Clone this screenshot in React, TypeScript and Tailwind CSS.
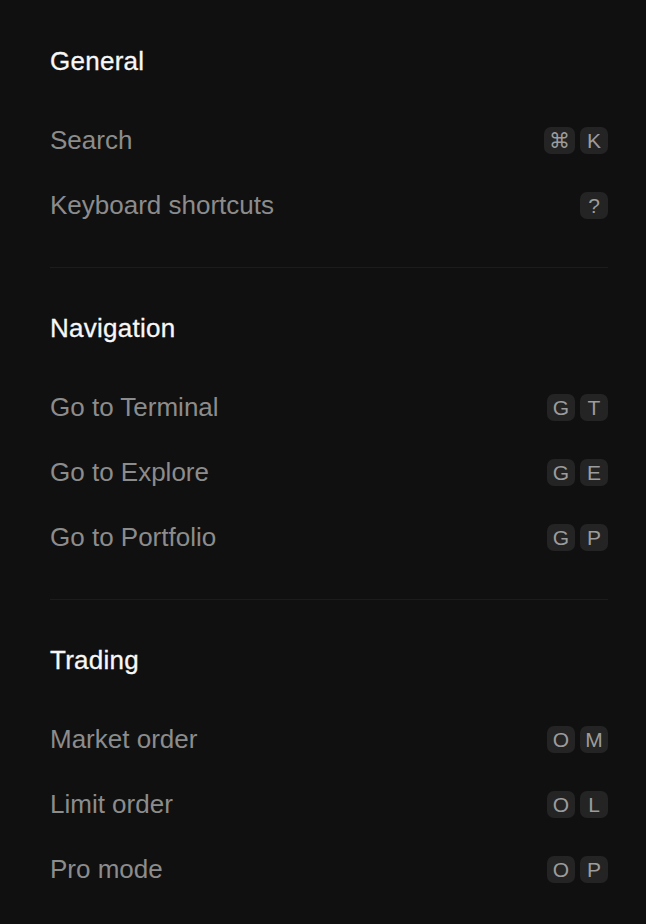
const sections = [
  {
    title: "General",
    items: [
      { label: "Search", keys: ["⌘", "K"] },
      { label: "Keyboard shortcuts", keys: ["?"] },
    ],
  },
  {
    title: "Navigation",
    items: [
      { label: "Go to Terminal", keys: ["G", "T"] },
      { label: "Go to Explore", keys: ["G", "E"] },
      { label: "Go to Portfolio", keys: ["G", "P"] },
    ],
  },
  {
    title: "Trading",
    items: [
      { label: "Market order", keys: ["O", "M"] },
      { label: "Limit order", keys: ["O", "L"] },
      { label: "Pro mode", keys: ["O", "P"] },
    ],
  },
];

function Kbd({ k }: { k: string }) {
  return (
    <kbd className="flex h-[27px] min-w-[28px] items-center justify-center rounded-[7px] bg-[#242424] px-[5px] font-[inherit] text-[21px] leading-none text-[#9c9c9c]">
      {k}
    </kbd>
  );
}

export default function App() {
  return (
    <div
      className="min-h-[924px] bg-[#101010] pl-[50px] pr-[38px] pt-[45px]"
      style={{ fontFamily: '"Liberation Sans", Arial, sans-serif' }}
    >
      {sections.map((s, i) => (
        <section key={s.title}>
          {i > 0 && <div className="mb-[44px] mt-[29px] h-px bg-[#1c1c1c]" />}
          <h2
            className="h-8 text-[26px] leading-8 tracking-[0.01em] text-[#f7f7f7]"
            style={{ WebkitTextStroke: "0.3px #f7f7f7" }}
          >
            {s.title}
          </h2>
          <ul className="mt-[31px]">
            {s.items.map((item) => (
              <li key={item.label} className="flex h-[65px] items-center justify-between">
                <span className="text-[26px] text-[#8c8c8c]">{item.label}</span>
                <span className="flex gap-[5px]">
                  {item.keys.map((k) => (
                    <Kbd key={k} k={k} />
                  ))}
                </span>
              </li>
            ))}
          </ul>
        </section>
      ))}
    </div>
  );
}
